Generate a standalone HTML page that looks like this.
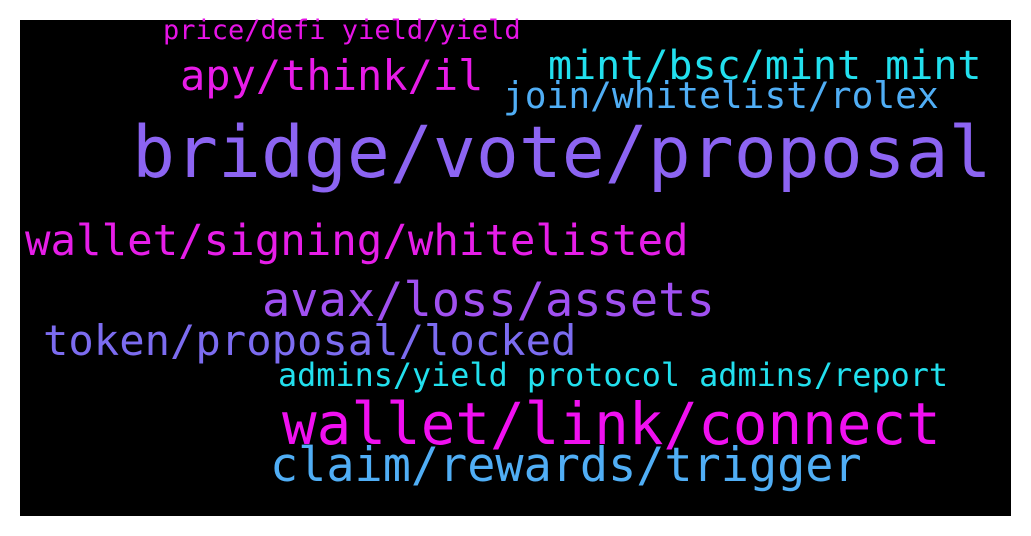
<!DOCTYPE html>
<html><head><meta charset="utf-8"><style>
html,body{margin:0;padding:0;background:#fff;width:1031px;height:536px;overflow:hidden}
#bg{position:absolute;left:20px;top:20px;width:991px;height:496px;background:#000}
.w{position:absolute;font-family:"DejaVu Sans Mono","Liberation Mono",monospace;line-height:1;white-space:pre}
</style></head><body>
<div id="bg"></div>
<div class="w" style="left:163px;top:17px;font-size:27px;color:#e614e6">price/defi yield/yield</div>
<div class="w" style="left:180px;top:55px;font-size:42px;color:#e81ce8">apy/think/il</div>
<div class="w" style="left:548px;top:46px;font-size:40px;color:#22e0ee">mint/bsc/mint mint</div>
<div class="w" style="left:503px;top:78px;font-size:36.2px;color:#50aef5">join/whitelist/rolex</div>
<div class="w" style="left:132px;top:117px;font-size:71.4px;color:#8c64f2">bridge/vote/proposal</div>
<div class="w" style="left:25px;top:220px;font-size:42.4px;color:#e61ee8">wallet/signing/whitelisted</div>
<div class="w" style="left:262px;top:277px;font-size:47px;color:#a050f0">avax/loss/assets</div>
<div class="w" style="left:43px;top:320px;font-size:42.2px;color:#7c6cf0">token/proposal/locked</div>
<div class="w" style="left:278px;top:360px;font-size:31.8px;color:#22e0ee">admins/yield protocol admins/report</div>
<div class="w" style="left:282px;top:396px;font-size:57.6px;color:#f010f0">wallet/link/connect</div>
<div class="w" style="left:270px;top:443px;font-size:46.8px;color:#50aef5">claim/rewards/trigger</div>
</body></html>
